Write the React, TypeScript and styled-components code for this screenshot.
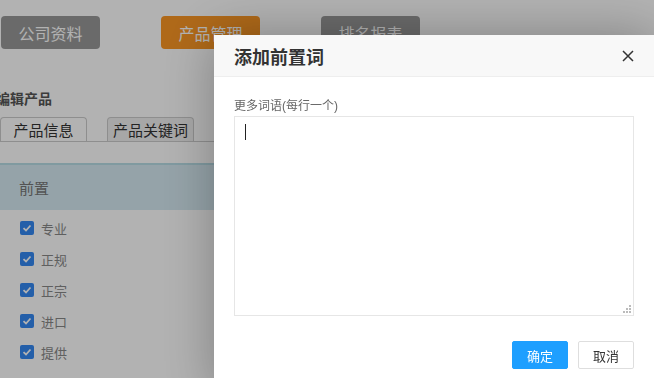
import React from 'react';
import styled, { createGlobalStyle } from 'styled-components';

const GlobalStyle = createGlobalStyle`
  html, body {
    margin: 0;
    padding: 0;
    width: 654px;
    height: 378px;
    overflow: hidden;
    background: #fff;
    font-family: "Liberation Sans", "Noto Sans CJK SC", sans-serif;
  }
`;

const Page = styled.div`
  padding: 16px 0 0 1px;
  width: 654px;
  height: 378px;
  box-sizing: border-box;
`;

const Nav = styled.div`
  display: flex;
  gap: 61px;
`;

const NavButton = styled.div<{ $active?: boolean }>`
  width: 99px;
  height: 33px;
  border-radius: 4px;
  background: ${(p) => (p.$active ? '#fb9725' : '#999')};
  color: #fff;
  font-size: 16px;
  display: flex;
  align-items: center;
  justify-content: center;
`;

const Heading = styled.h4`
  margin: 41px 0 0 -5px;
  font-size: 14px;
  line-height: 18px;
  font-weight: bold;
  color: #555;
`;

const Tabs = styled.div`
  display: flex;
  gap: 20px;
  margin-top: 9px;
  margin-left: -1px;
  border-bottom: 1px solid #ccc;
  width: 300px;
`;

const Tab = styled.div<{ $active?: boolean }>`
  width: 87px;
  height: 24px;
  box-sizing: border-box;
  border: 1px solid #ccc;
  border-bottom: none;
  border-radius: 4px 4px 0 0;
  background: ${(p) => (p.$active ? '#f0f0f0' : '#fff')};
  color: #333;
  font-size: 15px;
  display: flex;
  align-items: center;
  justify-content: center;
  white-space: nowrap;
`;

const Panel = styled.div`
  margin-top: 21px;
  margin-left: -1px;
`;

const PanelHead = styled.div`
  height: 45px;
  border-top: 2px solid #b8dde6;
  background: #d6eaf2;
  display: flex;
  align-items: center;
  justify-content: space-between;
  padding-left: 19px;
  font-size: 15px;
  color: #777;
`;

const HeadButton = styled.div`
  width: 40px;
  height: 34px;
  border-radius: 4px;
  background: #1497d6;
  margin-right: -10px;
`;

const CheckList = styled.div`
  display: flex;
  flex-direction: column;
  padding: 11px 0 0 20px;
  gap: 17px;
`;

const CheckRow = styled.label`
  display: flex;
  align-items: center;
  gap: 7px;
  font-size: 13px;
  color: #888;
  height: 14px;
`;

const Box = styled.span`
  width: 14px;
  height: 14px;
  border-radius: 2px;
  background: #3488f2;
  display: flex;
  align-items: center;
  justify-content: center;
`;

const Overlay = styled.div`
  position: fixed;
  inset: 0;
  background: rgba(0, 0, 0, 0.3);
`;

const Modal = styled.div`
  position: fixed;
  left: 214px;
  top: 35px;
  width: 440px;
  height: 360px;
  background: #fff;
  box-shadow: 1px 1px 50px rgba(0, 0, 0, 0.3);
  display: flex;
  flex-direction: column;
`;

const ModalHead = styled.div`
  height: 41px;
  background: #f8f8f8;
  border-bottom: 1px solid #eee;
  display: flex;
  align-items: center;
  justify-content: space-between;
  padding: 0 19px 0 20px;
`;

const Title = styled.div`
  font-size: 18px;
  font-weight: bold;
  color: #333;
`;

const Close = styled.div`
  width: 14px;
  height: 14px;
  display: flex;
  align-items: center;
  justify-content: center;
  cursor: pointer;
`;

const ModalBody = styled.div`
  padding: 21px 20px 0;
  display: flex;
  flex-direction: column;
`;

const Label = styled.div`
  font-size: 12px;
  line-height: 16px;
  color: #666;
  margin-bottom: 2px;
`;

const AreaWrap = styled.div`
  position: relative;
  width: 400px;
  height: 200px;
`;

const Area = styled.textarea`
  width: 400px;
  height: 200px;
  box-sizing: border-box;
  border: 1px solid #e6e6e6;
  padding: 8px 10px;
  font-size: 14px;
  font-family: inherit;
  caret-color: transparent;
  outline: none;
  margin: 0;
  resize: none;
  display: block;
`;

const Caret = styled.span`
  position: absolute;
  left: 11px;
  top: 8px;
  width: 1px;
  height: 16px;
  background: #222;
  pointer-events: none;
`;

const Grip = styled.span`
  position: absolute;
  right: 3px;
  bottom: 3px;
  pointer-events: none;
  display: flex;
`;

const Footer = styled.div`
  display: flex;
  justify-content: flex-end;
  gap: 10px;
  padding: 25px 20px 0;
`;

const Btn = styled.button<{ $primary?: boolean }>`
  width: 56px;
  height: 28px;
  box-sizing: border-box;
  border-radius: 2px;
  border: 1px solid ${(p) => (p.$primary ? '#1e9fff' : '#dedede')};
  background: ${(p) => (p.$primary ? '#1e9fff' : '#fff')};
  color: ${(p) => (p.$primary ? '#fff' : '#333')};
  font-size: 13px;
  font-family: inherit;
  padding: 0;
  cursor: pointer;
`;

const words = ['专业', '正规', '正宗', '进口', '提供'];

const gripDots = [
  [6, 0],
  [3, 3],
  [6, 3],
  [0, 6],
  [3, 6],
  [6, 6],
];

const App = () => {
  return (
    <>
      <GlobalStyle />
      <Page>
        <Nav>
          <NavButton>公司资料</NavButton>
          <NavButton $active>产品管理</NavButton>
          <NavButton>排名报表</NavButton>
        </Nav>
        <Heading>编辑产品</Heading>
        <Tabs>
          <Tab>产品信息</Tab>
          <Tab $active>产品关键词</Tab>
        </Tabs>
        <Panel>
          <PanelHead>
            前置
            <HeadButton />
          </PanelHead>
          <CheckList>
            {words.map((w) => (
              <CheckRow key={w}>
                <Box>
                  <svg width="10" height="10" viewBox="0 0 10 10">
                    <path d="M1.5 5.2 L4 7.5 L8.5 2.5" fill="none" stroke="#fff" strokeWidth="1.8" />
                  </svg>
                </Box>
                {w}
              </CheckRow>
            ))}
          </CheckList>
        </Panel>
      </Page>
      <Overlay />
      <Modal>
        <ModalHead>
          <Title>添加前置词</Title>
          <Close>
            <svg width="12" height="12" viewBox="0 0 12 12">
              <path d="M1 1 L11 11 M11 1 L1 11" stroke="#333" strokeWidth="1.5" />
            </svg>
          </Close>
        </ModalHead>
        <ModalBody>
          <Label>更多词语(每行一个)</Label>
          <AreaWrap>
            <Area />
            <Caret />
            <Grip>
              <svg width="8" height="8" viewBox="0 0 8 8">
                {gripDots.map(([x, y]) => (
                  <rect key={`${x}-${y}`} x={x} y={y} width="2" height="2" fill="#bbb" />
                ))}
              </svg>
            </Grip>
          </AreaWrap>
        </ModalBody>
        <Footer>
          <Btn $primary>确定</Btn>
          <Btn>取消</Btn>
        </Footer>
      </Modal>
    </>
  );
};

export default App;
